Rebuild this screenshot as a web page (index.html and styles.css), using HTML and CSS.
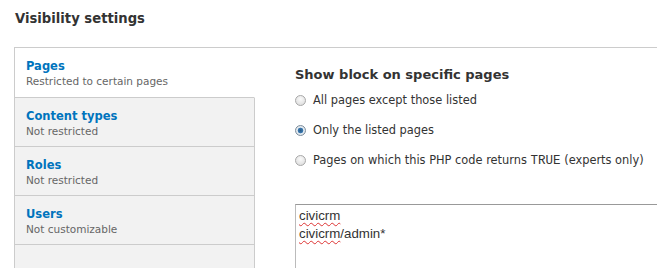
FILE: index.html
```html
<!DOCTYPE html>
<html>
<head>
<meta charset="utf-8">
<link rel="stylesheet" href="styles.css">
</head>
<body>
<h2 class="title">Visibility settings</h2>
<div class="vtabs">
  <ul class="tablist">
    <li class="tab active"><a class="tab-title">Pages</a><span class="tab-sum">Restricted to certain pages</span></li>
    <li class="tab"><a class="tab-title">Content types</a><span class="tab-sum">Not restricted</span></li>
    <li class="tab"><a class="tab-title">Roles</a><span class="tab-sum">Not restricted</span></li>
    <li class="tab"><a class="tab-title">Users</a><span class="tab-sum">Not customizable</span></li>
    <li class="tab-fill"></li>
  </ul>
  <div class="pane">
    <div class="label">Show block on specific pages</div>
    <div class="radios">
      <label class="radio-row"><span class="radio"></span><span>All pages except those listed</span></label>
      <label class="radio-row"><span class="radio checked"></span><span>Only the listed pages</span></label>
      <label class="radio-row"><span class="radio"></span><span>Pages on which this PHP code returns <code class="code">TRUE</code> (experts only)</span></label>
    </div>
    <div class="textarea"><span class="misspelt">civicrm</span><br><span class="misspelt">civicrm</span>/admin*</div>
  </div>
</div>
</body>
</html>
```
FILE: styles.css
```css
html, body { margin: 0; padding: 0; background: #fff; overflow: hidden; }
body { font-family: "DejaVu Sans", Verdana, sans-serif; color: #333; width: 657px; height: 268px; }
.title { margin: 0; padding: 11px 0 0 15px; font-size: 13.2px; line-height: 16px; font-weight: bold; color: #333; height: 47px; box-sizing: border-box; }
.vtabs { display: flex; margin-left: 14px; border-top: 1px solid #ccc; border-left: 1px solid #ccc; height: 230px; }
.tablist { list-style: none; margin: 0; padding: 0; width: 240px; flex: none; display: flex; flex-direction: column; }
.tab { background: #f2f2f2; border-right: 1px solid #ccc; border-bottom: 1px solid #ccc; height: 49px; box-sizing: border-box; padding: 10px 0 0 11px; display: flex; flex-direction: column; }
.tab.active { background: #fff; border-right-color: #fff; height: 50px; padding-top: 10px; }
.tab-fill { flex: 1; background: #f2f2f2; border-right: 1px solid #ccc; }
.tab-title { color: #0074bd; font-weight: bold; font-size: 11.5px; line-height: 16px; }
.tab-sum { color: #666; font-size: 10.5px; line-height: 15px; }
.pane { flex: 1; padding: 19px 0 0 40px; }
.label { font-weight: bold; font-size: 13px; line-height: 16px; color: #333; }
.radios { margin-top: 2px; }
.radio-row { display: flex; align-items: center; font-size: 11.4px; height: 30px; color: #333; white-space: nowrap; }
.radio { width: 11px; height: 11px; border-radius: 50%; box-sizing: border-box; border: 1px solid #a8a8a8; background: radial-gradient(circle at 50% 35%, #fafafa, #d8d8d8); margin-right: 7px; flex: none; }
.radio.checked { background: radial-gradient(circle, #2a5b88 0, #3b79b0 2.5px, #e8eef3 3.2px, #d0d8df 100%); border-color: #7d8d9c; }
.code { font-family: "Liberation Mono", "Courier New", monospace; font-size: 12.5px; }
.textarea { margin-top: 29px; border-top: 1px solid #999; border-left: 1px solid #bbb; height: 80px; padding: 2px 3px; font-family: "Liberation Sans", Arial, sans-serif; font-size: 13.3px; line-height: 18px; color: #333; }
.misspelt { text-decoration: underline wavy #d33; text-decoration-thickness: 1px; text-underline-offset: 2px; }
```
